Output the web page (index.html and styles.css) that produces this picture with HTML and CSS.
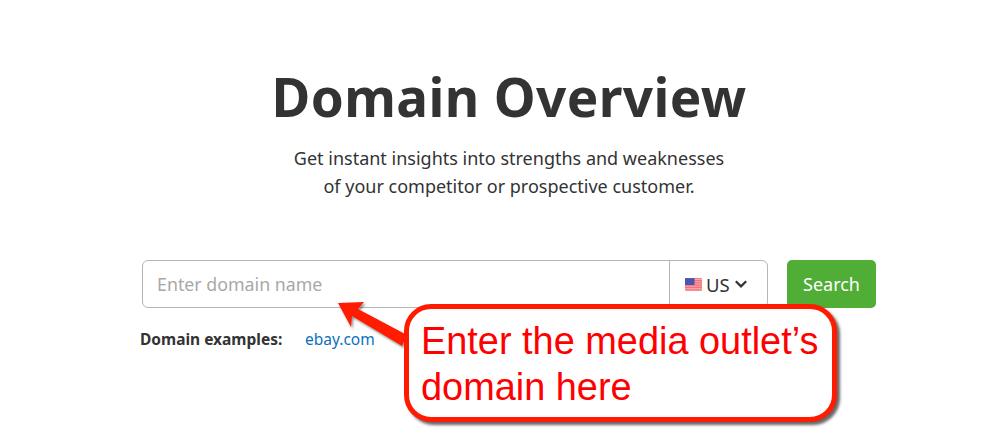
FILE: index.html
```html
<!DOCTYPE html>
<html lang="en">
<head>
<meta charset="utf-8">
<title>Domain Overview</title>
<link rel="stylesheet" href="styles.css">
</head>
<body>
<main class="page">
  <h1 class="title">Domain Overview</h1>
  <p class="sub">Get instant insights into strengths and weaknesses<br>of your competitor or prospective customer.</p>
  <form class="search">
    <div class="field">
      <span class="placeholder">Enter domain name</span>
      <span class="country">
        <svg class="flag" viewBox="0 0 16 12" width="17" height="13" aria-hidden="true">
          <rect width="16" height="12" rx="1" fill="#f0555f"/>
          <path d="M0 1.5h16M0 3.5h16M0 5.5h16M0 7.5h16M0 9.5h16M0 11.2h16" stroke="#fbd5d5" stroke-width=".8"/>
          <rect width="9" height="6.5" fill="#4a55b0"/>
        </svg>
        <span class="code">US</span>
        <svg class="chev" viewBox="0 0 14 10" width="14" height="10" aria-hidden="true">
          <path d="M1.8 2.2 7 7.4l5.2-5.2" fill="none" stroke="#333" stroke-width="2.2"/>
        </svg>
      </span>
    </div>
    <button class="btn" type="button">Search</button>
  </form>
  <div class="examples"><b>Domain examples:</b><a class="link">ebay.com</a></div>
</main>
<svg class="arrow" viewBox="0 0 100 70" width="100" height="70" aria-hidden="true">
  <defs>
    <filter id="s" x="-20%" y="-20%" width="150%" height="150%">
      <feDropShadow dx="1.5" dy="2" stdDeviation="1" flood-color="#444" flood-opacity=".6"/>
    </filter>
  </defs>
  <path d="M7 1 33 0 27 7 76 33 71 44 21 14 20 25Z" fill="#ff1a00" filter="url(#s)"/>
</svg>
<div class="callout">Enter the media outlet’s<br>domain here</div>
</body>
</html>
```
FILE: styles.css
```css
* { box-sizing: border-box; }
html, body { margin: 0; padding: 0; }
body {
  width: 1000px; height: 440px; overflow: hidden; position: relative;
  background: #fff; color: #333;
  font-family: "Noto Sans", "Open Sans", sans-serif;
}
.page { display: flex; flex-direction: column; align-items: center; padding-top: 64px; }
.title {
  margin: 0; font-size: 53px; line-height: 66px; font-weight: 700;
  color: #333; letter-spacing: .4px; transform: translateX(9px);
}
.sub {
  margin: 14px 0 0; font-size: 18px; line-height: 28px; text-align: center; color: #333;
  transform: translateX(9px);
}
.search { display: flex; gap: 19px; width: 734px; margin: 60px 0 0 18px; }
.field {
  flex: 1; height: 48px; display: flex; align-items: center;
  border: 1px solid #b5b5b5; border-radius: 6px; background: #fff;
}
.placeholder { flex: 1; padding-left: 14px; font-size: 17.8px; color: #a8a8a8; }
.country {
  width: 98px; height: 100%; display: flex; align-items: center; padding-left: 15px; gap: 4px;
  border-left: 1px solid #b5b5b5; font-size: 18.5px; color: #333;
}
.btn {
  width: 89px; height: 48px; padding: 0; border: 0; border-radius: 5px;
  background: #50ad36; color: #fff; font: inherit; font-size: 18px;
}
.examples { display: flex; width: 734px; margin: 20px 0 0 14px; font-size: 15.5px; line-height: 22px; }
.examples b { font-weight: 700; width: 165px; }
.link { color: #0a70bd; }
.arrow { position: absolute; left: 331px; top: 302px; }
.callout {
  position: absolute; left: 404px; top: 304px; width: 433px; height: 118px;
  padding: 9px 0 0 12px;
  border: 5px solid #ff1a00; border-radius: 27px; background: #fff;
  box-shadow: 3px 3px 3px #666;
  font-family: "Liberation Sans", Arial, sans-serif; font-size: 37.9px; line-height: 46px; color: #ff0000;
}
```
